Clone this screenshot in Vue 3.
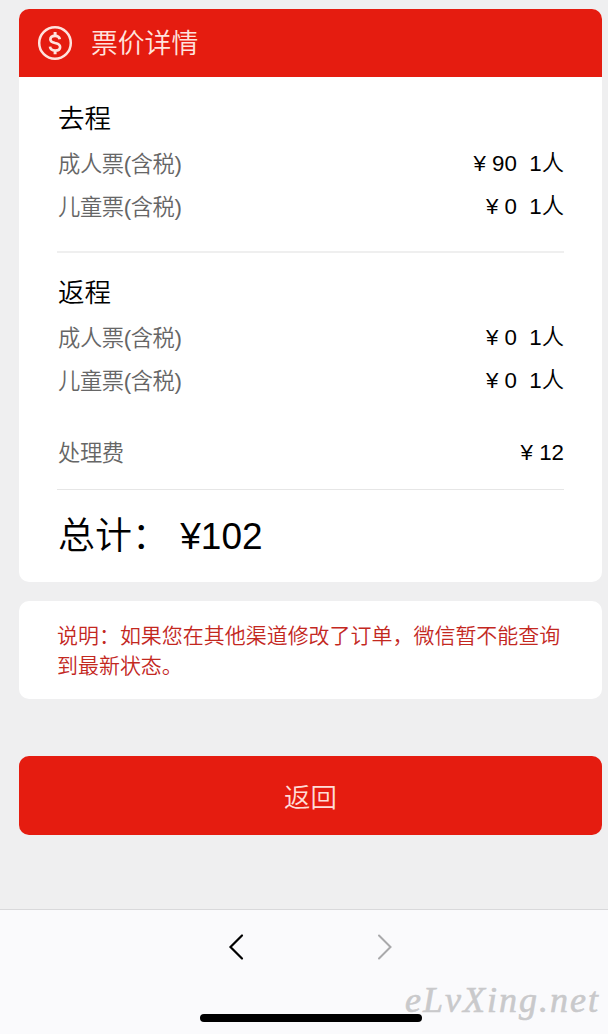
<template>
  <div class="page">
    <div class="content">
      <div class="card">
        <div class="card-header">
          <svg class="coin-icon" viewBox="0 0 36 36" fill="none">
            <circle cx="18" cy="18" r="15.8" stroke="currentColor" stroke-width="2.5" />
            <path
              d="M22.8 14.3C22.4 12 20.6 10.8 18.1 10.8C15.2 10.8 13.4 12.2 13.4 14.4C13.4 16.7 15.4 17.3 18.1 18C21.1 18.7 23.1 19.5 23.1 21.9C23.1 24.2 21.1 25.5 18.2 25.5C15.3 25.5 13.3 24.1 13 21.7"
              stroke="currentColor"
              stroke-width="2.7"
            />
            <path d="M18.1 7V11.2M18.1 25.2V29.2" stroke="currentColor" stroke-width="3" />
          </svg>
          <span class="card-title">票价详情</span>
        </div>
        <div class="card-body">
          <div v-for="trip in trips" :key="trip.name" class="trip">
            <div class="trip-name">{{ trip.name }}</div>
            <div v-for="item in trip.items" :key="item.label" class="row">
              <span class="label">{{ item.label }}</span>
              <span class="value">¥ {{ item.price }}&nbsp; {{ item.count }}人</span>
            </div>
          </div>
          <div class="row fee">
            <span class="label">处理费</span>
            <span class="value">¥ {{ fee }}</span>
          </div>
          <div class="total">总计： ¥{{ total }}</div>
        </div>
      </div>

      <div class="notice">说明：如果您在其他渠道修改了订单，微信暂不能查询到最新状态。</div>

      <button class="back-btn">返回</button>
    </div>

    <div class="toolbar">
      <div class="nav">
        <svg class="nav-icon" viewBox="0 0 16 28" fill="none">
          <path d="M14 2.5L2.5 14L14 25.5" stroke="currentColor" stroke-width="2.2" stroke-linecap="round" />
        </svg>
        <svg class="nav-icon disabled" viewBox="0 0 16 28" fill="none">
          <path d="M2 2.5L13.5 14L2 25.5" stroke="currentColor" stroke-width="2" stroke-linecap="round" />
        </svg>
      </div>
      <div class="home-indicator"></div>
      <span class="watermark">eLvXing.net</span>
    </div>
  </div>
</template>

<script setup>
const trips = [
  {
    name: '去程',
    items: [
      { label: '成人票(含税)', price: 90, count: 1 },
      { label: '儿童票(含税)', price: 0, count: 1 }
    ]
  },
  {
    name: '返程',
    items: [
      { label: '成人票(含税)', price: 0, count: 1 },
      { label: '儿童票(含税)', price: 0, count: 1 }
    ]
  }
]

const fee = 12
const total = 102
</script>

<style>
body {
  background: #efeff0;
}
</style>

<style scoped>
.page {
  display: flex;
  flex-direction: column;
  height: 1034px;
  overflow: hidden;
  background: #efeff0;
  color: #000;
  font-family: "Liberation Sans", "Noto Sans CJK SC", sans-serif;
  font-weight: 350;
}

.content {
  flex: 1;
  padding: 9px 6px 0 19px;
}

.card {
  height: 573px;
  border-radius: 10px;
  overflow: hidden;
  background: #fff;
}

.card-header {
  display: flex;
  align-items: center;
  height: 68px;
  box-sizing: border-box;
  padding-left: 18px;
  background: #e51c10;
  color: #ffe3de;
}

.coin-icon {
  width: 36px;
  height: 36px;
}

.card-title {
  padding-top: 2px;
  margin-left: 18px;
  font-size: 26.8px;
  line-height: 40px;
}

.card-body {
  padding: 0 38px;
}

.trip {
  padding-top: 21px;
}

.trip:first-child {
  padding-bottom: 23px;
  border-bottom: 2px solid #efefef;
}

.trip + .trip {
  padding-top: 19px;
}

.trip-name {
  margin-bottom: 3px;
  padding-left: 1px;
  font-size: 26.5px;
  line-height: 42px;
}

.row {
  display: flex;
  justify-content: space-between;
  height: 42.5px;
  font-size: 22.3px;
  line-height: 42.5px;
}

.label {
  padding: 1px 0 0 1px;
  color: #666;
  letter-spacing: -0.4px;
}

.value {
  white-space: nowrap;
}

.fee {
  margin-top: 30px;
  padding-bottom: 14px;
  border-bottom: 1px solid #e6e6e6;
}

.total {
  padding: 1px 0 0 1px;
  font-size: 37px;
  line-height: 92px;
  word-spacing: 1px;
}

.notice {
  height: 98px;
  box-sizing: border-box;
  margin-top: 19px;
  padding: 20px 36px 0 38px;
  border-radius: 10px;
  background: #fff;
  color: #c3281f;
  font-size: 20.98px;
  line-height: 30px;
}

.back-btn {
  display: block;
  width: 100%;
  height: 79px;
  margin-top: 57px;
  padding: 0;
  border: none;
  border-radius: 10px;
  background: #e51c10;
  color: #ffdcd7;
  font: inherit;
  font-size: 26.4px;
}

.toolbar {
  position: relative;
  display: flex;
  flex-direction: column;
  align-items: center;
  justify-content: space-between;
  height: 125px;
  box-sizing: border-box;
  padding: 23px 0 12px;
  border-top: 1px solid #d9d9db;
  background: #fafafc;
}

.nav {
  display: flex;
  gap: 133px;
  margin-left: 13px;
}

.nav-icon {
  width: 16px;
  height: 28px;
}

.nav-icon.disabled {
  color: #a9a9ab;
}

.home-indicator {
  width: 222px;
  height: 8px;
  margin-left: 13px;
  border-radius: 4px;
  background: #000;
}

.watermark {
  position: absolute;
  right: 8px;
  bottom: 14px;
  color: #c9c9cb;
  font-family: "Brush Script MT", "Liberation Serif", cursive;
  font-size: 36px;
  font-style: italic;
  font-weight: 400;
  line-height: 40px;
  letter-spacing: 2px;
  -webkit-text-stroke: 0.6px #c9c9cb;
}
</style>
